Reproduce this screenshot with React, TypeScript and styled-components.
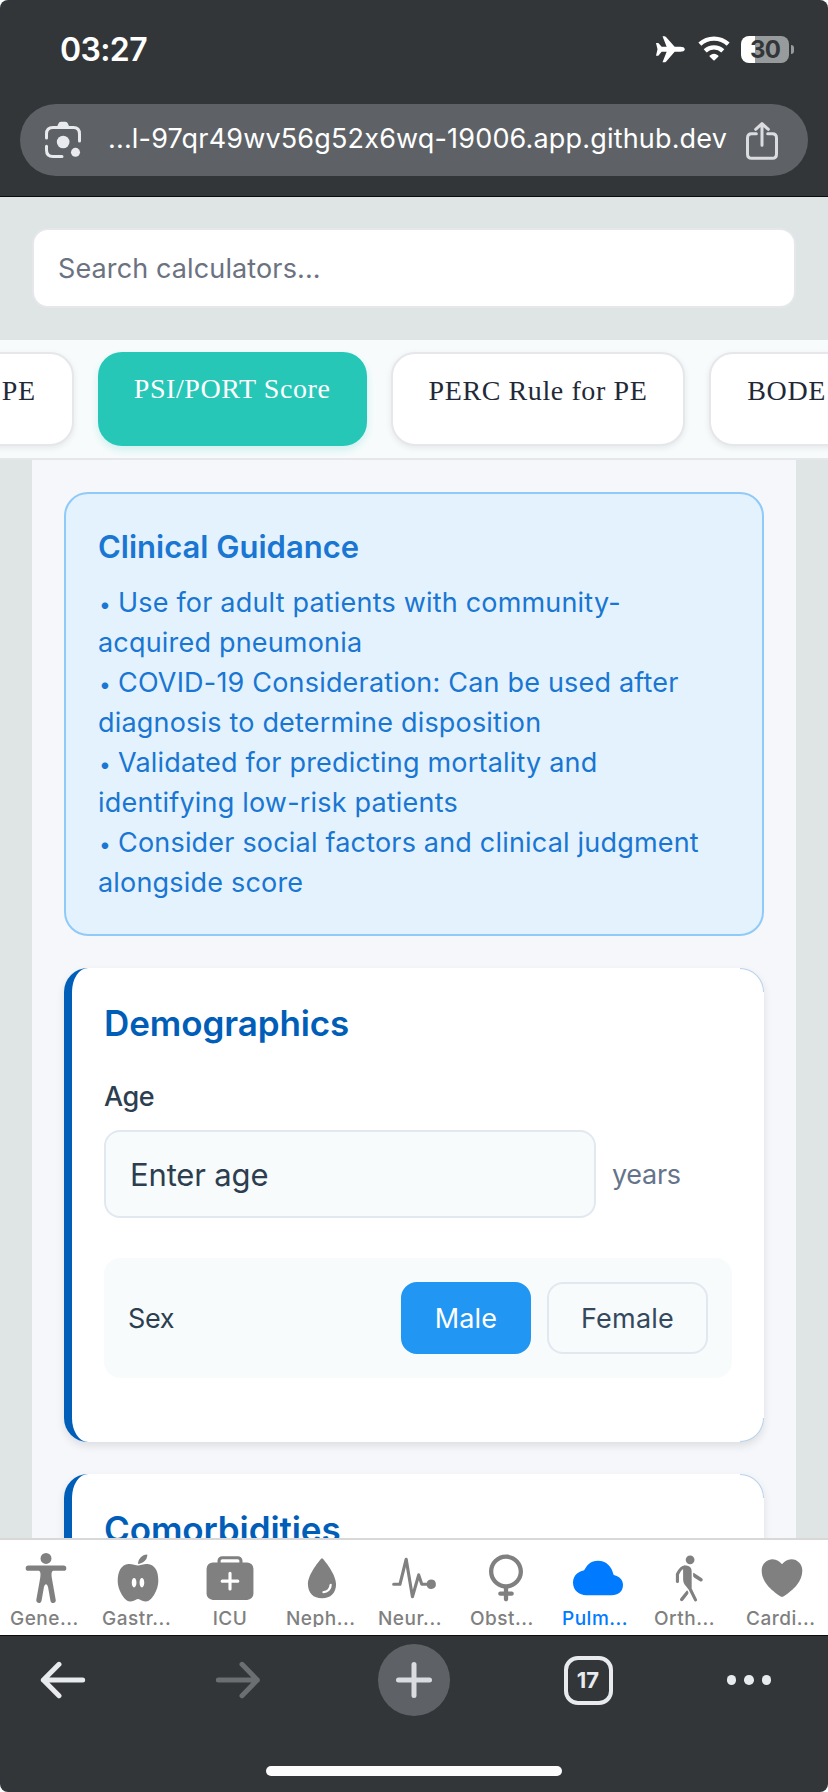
import React from 'react';
import styled, { createGlobalStyle } from 'styled-components';
import {
  IoBody,
  IoCloud,
  IoFemale,
  IoHeart,
  IoMedkit,
  IoNutrition,
  IoPulse,
  IoWalk,
  IoWater,
} from 'react-icons/io5';

const GlobalStyle = createGlobalStyle`
  *, *::before, *::after { box-sizing: border-box; }
  body {
    margin: 0;
    background: #fff;
    font-family: Inter, 'Liberation Sans', sans-serif;
    -webkit-font-smoothing: antialiased;
  }
  button, input { font: inherit; margin: 0; }
`;

const Screen = styled.div`
  width: 828px;
  height: 1792px;
  display: flex;
  flex-direction: column;
  overflow: hidden;
  border-radius: 8px;
  background: #323639;
`;

/* Browser chrome: top */

const BrowserTop = styled.header`
  flex: none;
  height: 197px;
  border-bottom: 1px solid #0e0b0d;
  display: flex;
  flex-direction: column;
`;

const StatusBar = styled.div`
  height: 104px;
  padding: 36px 34px 0 60px;
  display: flex;
  align-items: flex-start;
  justify-content: space-between;
`;

const Clock = styled.time`
  color: #fff;
  font-size: 32px;
  font-weight: 600;
  line-height: 28px;
  letter-spacing: -0.6px;
`;

const StatusIcons = styled.div`
  display: flex;
  align-items: center;
  color: #fff;
`;

const AirplaneSvg = styled.svg`
  width: 29px;
  height: 27px;
  margin-right: 13px;
`;

const WifiSvg = styled.svg`
  width: 32px;
  height: 27px;
  margin-right: 11px;
`;

const Battery = styled.div`
  width: 48px;
  height: 27px;
  border-radius: 8px;
  background: linear-gradient(to right, #fff 14px, #989b9c 14px);
  color: #323639;
  font-size: 24px;
  font-weight: 700;
  line-height: 27px;
  letter-spacing: -0.8px;
  text-align: center;
`;

const BatteryTip = styled.div`
  width: 3px;
  height: 9px;
  margin-left: 2px;
  border-radius: 0 5px 5px 0;
  background: #989b9c;
`;

const AddressBar = styled.div`
  height: 72px;
  margin: 0 20px;
  padding: 0 30px 0 25px;
  border-radius: 36px;
  background: #5e6266;
  display: flex;
  align-items: center;
`;

const LensSvg = styled.svg`
  width: 36px;
  height: 38px;
  flex: none;
`;

const Url = styled.span`
  flex: 1;
  padding: 0 0 3px 27px;
  color: #fff;
  font-size: 27px;
  line-height: 36px;
  letter-spacing: 0.17px;
  white-space: nowrap;
`;

const ShareSvg = styled.svg`
  width: 32px;
  height: 38px;
  margin-top: 1px;
  flex: none;
`;

/* Web page */

const WebPage = styled.main`
  flex: 1;
  min-height: 0;
  display: flex;
  flex-direction: column;
  background: #dfe5e4;
`;

const SearchArea = styled.div`
  flex: none;
  height: 143px;
  padding: 31px 32px 0;
`;

const SearchInput = styled.input`
  display: block;
  width: 100%;
  height: 80px;
  padding: 0 24px;
  border: 2px solid #e5e7eb;
  border-radius: 16px;
  outline: none;
  background: #fff;
  color: #1f2937;
  font-size: 27px;
  letter-spacing: 0.12px;
  &::placeholder {
    color: #6b7280;
    opacity: 1;
  }
`;

const ChipStrip = styled.nav`
  flex: none;
  height: 120px;
  padding-top: 12px;
  border-bottom: 2px solid #e5e7e9;
  background: #f8fbfc;
  display: flex;
  align-items: flex-start;
  gap: 24px;
  overflow: hidden;
`;

const Chip = styled.div<{ $active?: boolean }>`
  flex: none;
  height: 94px;
  padding: 20px 36px 0;
  border-radius: 24px;
  border: ${(p) => (p.$active ? '0' : '2px solid #e5e7eb')};
  background: ${(p) => (p.$active ? '#27c7b8' : '#fff')};
  color: ${(p) => (p.$active ? '#fff' : '#1f2937')};
  box-shadow: ${(p) =>
    p.$active ? '0 4px 8px rgba(39, 199, 184, 0.2)' : '0 2px 6px rgba(0, 0, 0, 0.08)'};
  font-family: 'Liberation Serif', 'Times New Roman', serif;
  font-size: 28px;
  line-height: 33px;
  letter-spacing: 0.6px;
  white-space: nowrap;
  &:first-child {
    margin-left: -36.2px;
  }
`;

const Content = styled.section`
  flex: 1;
  min-height: 0;
  margin: 0 32px;
  padding: 32px;
  overflow: hidden;
  background: #f5f7fb;
  display: flex;
  flex-direction: column;
  gap: 32px;
`;

const Guidance = styled.article`
  flex: none;
  padding: 32px 32px 31px;
  border: 2px solid #90caf9;
  border-radius: 24px;
  background: #e3f2fd;
  color: #1976d2;
`;

const GuidanceTitle = styled.h2`
  margin: 0 0 16px;
  font-size: 31px;
  font-weight: 600;
  line-height: 41px;
`;

const GuidanceText = styled.p`
  margin: 0;
  font-size: 27px;
  line-height: 40px;
  letter-spacing: 0.19px;
  white-space: pre-line;
`;

const Bullet = styled.span`
  display: inline-block;
  width: 20px;
  padding-left: 1px;
  font-size: 21px;
  line-height: 24px;
`;

const Card = styled.article`
  position: relative;
  flex: none;
  padding: 32px;
  border-left: 8px solid #005eb8;
  border-radius: 24px;
  background: #fff;
  box-shadow: 0 4px 8px rgba(0, 0, 0, 0.1);
  &::before,
  &::after {
    content: '';
    position: absolute;
    right: 0;
    width: 24px;
    height: 24px;
    border-right: 1px solid rgba(0, 94, 184, 0.28);
  }
  &::before {
    top: 0;
    border-top: 1px solid rgba(0, 94, 184, 0.28);
    border-top-right-radius: 24px;
  }
  &::after {
    bottom: 0;
    border-bottom: 1px solid rgba(0, 94, 184, 0.28);
    border-bottom-right-radius: 24px;
  }
`;

const CardTitle = styled.h2`
  margin: 0 0 33px;
  color: #005eb8;
  font-size: 35px;
  font-weight: 600;
  line-height: 46px;
  letter-spacing: -0.1px;
`;

const FieldLabel = styled.label`
  display: block;
  margin-bottom: 15px;
  color: #2c3e50;
  font-size: 27px;
  font-weight: 500;
  line-height: 36px;
  letter-spacing: -0.4px;
`;

const InputRow = styled.div`
  display: flex;
  align-items: center;
  gap: 16px;
`;

const NumberInput = styled.input`
  width: 492px;
  height: 88px;
  padding: 0 24px;
  border: 2px solid #e2e8f0;
  border-radius: 16px;
  outline: none;
  background: #f8fbfc;
  color: #2c3e50;
  font-size: 31px;
  letter-spacing: -0.15px;
  &::placeholder {
    color: #2c3e50;
    opacity: 1;
  }
`;

const Unit = styled.span`
  color: #64748b;
  font-size: 27px;
  letter-spacing: -0.3px;
`;

const ToggleRow = styled.div`
  margin: 40px 0 32px;
  padding: 24px;
  border-radius: 16px;
  background: #f8fbfc;
  display: flex;
  align-items: center;
  gap: 16px;
`;

const ToggleLabel = styled.span`
  flex: 1;
  color: #2c3e50;
  font-size: 27px;
  letter-spacing: -0.4px;
`;

const ToggleButton = styled.button<{ $selected?: boolean }>`
  width: ${(p) => (p.$selected ? 130 : 161)}px;
  height: 72px;
  padding: 0;
  border: 2px solid ${(p) => (p.$selected ? '#2196f3' : '#e2e8f0')};
  border-radius: 16px;
  background: ${(p) => (p.$selected ? '#2196f3' : '#f8fbfc')};
  color: ${(p) => (p.$selected ? '#fff' : '#34495e')};
  font-size: 27px;
  letter-spacing: 0.2px;
`;

/* App tab bar */

const TabBar = styled.nav`
  flex: none;
  height: 97px;
  padding-top: 13px;
  border-top: 2px solid #d8d8d8;
  background: #fff;
  display: grid;
  grid-template-columns: repeat(9, 1fr);
`;

const Tab = styled.div<{ $active?: boolean }>`
  min-width: 0;
  display: flex;
  flex-direction: column;
  align-items: center;
  color: ${(p) => (p.$active ? '#007aff' : '#808080')};
  svg {
    display: block;
    width: 50px;
    height: 50px;
  }
`;

const TabLabel = styled.span<{ $center?: boolean }>`
  width: 72px;
  height: 18px;
  margin-top: 6px;
  overflow: hidden;
  font-size: 19px;
  font-weight: 500;
  line-height: 20px;
  letter-spacing: 0.5px;
  text-align: ${(p) => (p.$center ? 'center' : 'left')};
  white-space: nowrap;
`;

/* Browser chrome: bottom */

const BrowserBottom = styled.footer`
  flex: none;
  height: 157px;
  padding-top: 8px;
  border-top: 1px solid #0e0b0d;
  display: flex;
  flex-direction: column;
  align-items: center;
`;

const Toolbar = styled.div`
  width: 100%;
  height: 72px;
  display: grid;
  grid-template-columns: 126px 224px 128px 220px 102px;
  align-items: center;
  justify-items: center;
`;

const ArrowSvg = styled.svg<{ $disabled?: boolean }>`
  width: 46px;
  height: 38px;
  color: ${(p) => (p.$disabled ? '#6c6f71' : '#e8eaed')};
`;

const NewTab = styled.div`
  width: 72px;
  height: 72px;
  border-radius: 50%;
  background: #5e6266;
  color: #dadce0;
  display: grid;
  place-items: center;
`;

const TabCount = styled.div`
  width: 49px;
  height: 49px;
  border: 4.5px solid #e8eaed;
  border-radius: 14px;
  color: #e8eaed;
  font-size: 22px;
  font-weight: 700;
  line-height: 41px;
  text-align: center;
`;

const Dots = styled.div`
  display: flex;
  gap: 8px;
`;

const Dot = styled.span`
  width: 9.6px;
  height: 9.6px;
  border-radius: 50%;
  background: #e8eaed;
`;

const HomeIndicator = styled.div`
  width: 296px;
  height: 10px;
  margin-top: 50px;
  border-radius: 5px;
  background: #fcfcfc;
`;

const Airplane = () => (
  <AirplaneSvg viewBox="48 35 87 81" fill="currentColor" aria-hidden>
    <path d="M134.500 75C134.500 70 128 67.500 121 67.500H104L78 38Q76 36 73 36H67.500L80 67.500H65L55 56H48L52.500 75L48 94H55L65 82.500H80L67.500 114H73Q76 114 78 112L104 82.500H121C128 82.500 134.500 80 134.500 75Z" />
  </AirplaneSvg>
);

const Wifi = () => (
  <WifiSvg viewBox="172 33 96 81" fill="none" stroke="currentColor" aria-hidden>
    <path d="M177.500 57.500A63 63 0 0 1 262.500 57.500" strokeWidth="13" />
    <path d="M193.500 77.500A39 39 0 0 1 246.500 77.500" strokeWidth="13" />
    <path d="M220 104L209 93.500A17 17 0 0 1 231 93.500Z" fill="currentColor" strokeWidth="5" strokeLinejoin="round" />
  </WifiSvg>
);

const Lens = () => (
  <LensSvg viewBox="45 48 108 114" fill="none" stroke="currentColor" color="#e8eaed" aria-hidden>
    <path
      d="M49.500 99V87Q49.500 67.500 69 67.500H130Q148.500 67.500 148.500 87V108M49.500 124V135Q49.500 154.500 69 154.500H96"
      strokeWidth="9"
      strokeLinecap="round"
    />
    <path d="M77 66Q84 63 85 56Q87 50 93 50H106Q112 50 114 56Q115 63 122 66Z" fill="currentColor" stroke="none" />
    <circle cx="99.500" cy="111" r="19" fill="currentColor" stroke="none" />
    <circle cx="136.500" cy="142" r="13.500" fill="currentColor" stroke="none" />
  </LensSvg>
);

const Share = () => (
  <ShareSvg
    viewBox="996 366 96 114"
    fill="none"
    stroke="#dadce0"
    strokeWidth="9"
    strokeLinecap="round"
    strokeLinejoin="round"
    aria-hidden
  >
    <path d="M1027 401.500H1013Q1000.500 401.500 1000.500 414V462Q1000.500 475 1013 475H1075Q1087.500 475 1087.500 462V414Q1087.500 401.500 1075 401.500H1061" />
    <path d="M1044 436V372M1025 388L1044 371L1063 388" />
  </ShareSvg>
);

const Arrow = ({ forward }: { forward?: boolean }) => (
  <ArrowSvg
    $disabled={forward}
    viewBox="0 0 138 114"
    fill="none"
    stroke="currentColor"
    strokeWidth="15"
    strokeLinecap="round"
    strokeLinejoin="round"
    aria-hidden
  >
    <path d={forward ? 'M10 57H127M81 10L127 57L81 104' : 'M128 57H10M57 10L10 57L57 104'} />
  </ArrowSvg>
);

const Plus = () => (
  <svg width="38" height="38" viewBox="0 0 38 38" stroke="currentColor" strokeWidth="5" strokeLinecap="round" aria-hidden>
    <path d="M3.500 19H34.500M19 3.500V34.500" />
  </svg>
);

const guidanceItems = [
  'Use for adult patients with community-\nacquired pneumonia',
  'COVID-19 Consideration: Can be used after\ndiagnosis to determine disposition',
  'Validated for predicting mortality and\nidentifying low-risk patients',
  'Consider social factors and clinical judgment\nalongside score',
];

const tabs = [
  { label: 'Gene...', Icon: IoBody },
  { label: 'Gastr...', Icon: IoNutrition },
  { label: 'ICU', Icon: IoMedkit, center: true },
  { label: 'Neph...', Icon: IoWater },
  { label: 'Neur...', Icon: IoPulse },
  { label: 'Obst...', Icon: IoFemale },
  { label: 'Pulm...', Icon: IoCloud, active: true },
  { label: 'Orth...', Icon: IoWalk },
  { label: 'Cardi...', Icon: IoHeart },
];

export default function App() {
  return (
    <>
      <GlobalStyle />
      <Screen>
        <BrowserTop>
          <StatusBar>
            <Clock>03:27</Clock>
            <StatusIcons>
              <Airplane />
              <Wifi />
              <Battery>30</Battery>
              <BatteryTip />
            </StatusIcons>
          </StatusBar>
          <AddressBar>
            <Lens />
            <Url>...l-97qr49wv56g52x6wq-19006.app.github.dev</Url>
            <Share />
          </AddressBar>
        </BrowserTop>

        <WebPage>
          <SearchArea>
            <SearchInput placeholder="Search calculators..." />
          </SearchArea>
          <ChipStrip>
            <Chip>PE</Chip>
            <Chip $active>PSI/PORT Score</Chip>
            <Chip>PERC Rule for PE</Chip>
            <Chip>BODE</Chip>
          </ChipStrip>
          <Content>
            <Guidance>
              <GuidanceTitle>Clinical Guidance</GuidanceTitle>
              {guidanceItems.map((text) => (
                <GuidanceText key={text}>
                  <Bullet>•</Bullet>
                  {text}
                </GuidanceText>
              ))}
            </Guidance>
            <Card>
              <CardTitle>Demographics</CardTitle>
              <FieldLabel htmlFor="age">Age</FieldLabel>
              <InputRow>
                <NumberInput id="age" placeholder="Enter age" />
                <Unit>years</Unit>
              </InputRow>
              <ToggleRow>
                <ToggleLabel>Sex</ToggleLabel>
                <ToggleButton $selected>Male</ToggleButton>
                <ToggleButton>Female</ToggleButton>
              </ToggleRow>
            </Card>
            <Card>
              <CardTitle>Comorbidities</CardTitle>
            </Card>
          </Content>
          <TabBar>
            {tabs.map(({ label, Icon, active, center }) => (
              <Tab key={label} $active={active}>
                <Icon />
                <TabLabel $center={center}>{label}</TabLabel>
              </Tab>
            ))}
          </TabBar>
        </WebPage>

        <BrowserBottom>
          <Toolbar>
            <Arrow />
            <Arrow forward />
            <NewTab>
              <Plus />
            </NewTab>
            <TabCount>17</TabCount>
            <Dots>
              <Dot />
              <Dot />
              <Dot />
            </Dots>
          </Toolbar>
          <HomeIndicator />
        </BrowserBottom>
      </Screen>
    </>
  );
}
